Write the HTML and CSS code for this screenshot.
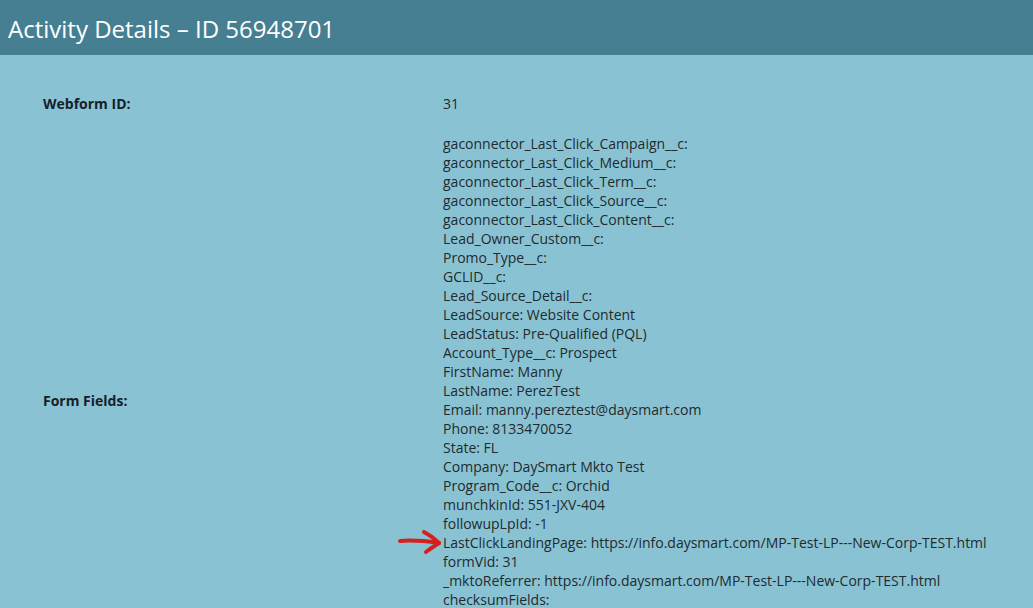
FILE: index.html
```html
<!DOCTYPE html>
<html>
<head>
<meta charset="utf-8">
<link rel="stylesheet" href="styles.css">
</head>
<body>
<header class="header"><h1 class="title">Activity Details – ID 56948701</h1></header>
<main class="content">
  <div class="details">
    <div class="label">Webform ID:</div>
    <div class="value">31</div>
    <div class="label label-center">Form Fields:</div>
    <div class="value fields">
      <div>gaconnector_Last_Click_Campaign__c:</div>
      <div>gaconnector_Last_Click_Medium__c:</div>
      <div>gaconnector_Last_Click_Term__c:</div>
      <div>gaconnector_Last_Click_Source__c:</div>
      <div>gaconnector_Last_Click_Content__c:</div>
      <div>Lead_Owner_Custom__c:</div>
      <div>Promo_Type__c:</div>
      <div>GCLID__c:</div>
      <div>Lead_Source_Detail__c:</div>
      <div>LeadSource: Website Content</div>
      <div>LeadStatus: Pre-Qualified (PQL)</div>
      <div>Account_Type__c: Prospect</div>
      <div>FirstName: Manny</div>
      <div>LastName: PerezTest</div>
      <div>Email: manny.pereztest@daysmart.com</div>
      <div>Phone: 8133470052</div>
      <div>State: FL</div>
      <div>Company: DaySmart Mkto Test</div>
      <div>Program_Code__c: Orchid</div>
      <div>munchkinId: 551-JXV-404</div>
      <div>followupLpId: -1</div>
      <div class="marked">LastClickLandingPage: https://info.daysmart.com/MP-Test-LP---New-Corp-TEST.html
        <svg class="arrow" width="46" height="26" viewBox="0 0 46 26"><path d="M3 12 C 14 11, 28 12, 42 14" fill="none" stroke="#d61f1f" stroke-width="4" stroke-linecap="round"/><path d="M27 3 C 33 6, 38 10, 42 14 C 37 17, 33 20, 29 23" fill="none" stroke="#d61f1f" stroke-width="4" stroke-linecap="round" stroke-linejoin="round"/></svg>
      </div>
      <div>formVid: 31</div>
      <div>_mktoReferrer: https://info.daysmart.com/MP-Test-LP---New-Corp-TEST.html</div>
      <div>checksumFields:</div>
    </div>
  </div>
</main>
</body>
</html>
```
FILE: styles.css
```css
html, body {
  margin: 0;
  padding: 0;
  background: #89c3d3;
  height: 100%;
  overflow: hidden;
}
body {
  font-family: "Open Sans", "DejaVu Sans", sans-serif;
  color: #222a2e;
}
.header {
  background: #467f92;
  height: 55px;
  display: flex;
  align-items: center;
  padding-left: 8px;
}
.title {
  margin: 0;
  font-weight: 400;
  font-size: 24px;
  color: #ffffff;
  position: relative;
  top: 1px;
}
.content {
  padding: 39px 0 0 43px;
}
.details {
  display: grid;
  grid-template-columns: 400px 1fr;
  row-gap: 21px;
  font-size: 14px;
  line-height: 19px;
}
.label {
  font-weight: 700;
  font-size: 14px;
  color: #15202a;
}
.label-center {
  align-self: center;
}
.fields {
  padding-bottom: 57px;
}
.marked {
  position: relative;
}
.arrow {
  position: absolute;
  left: -46px;
  top: -4px;
}
```
